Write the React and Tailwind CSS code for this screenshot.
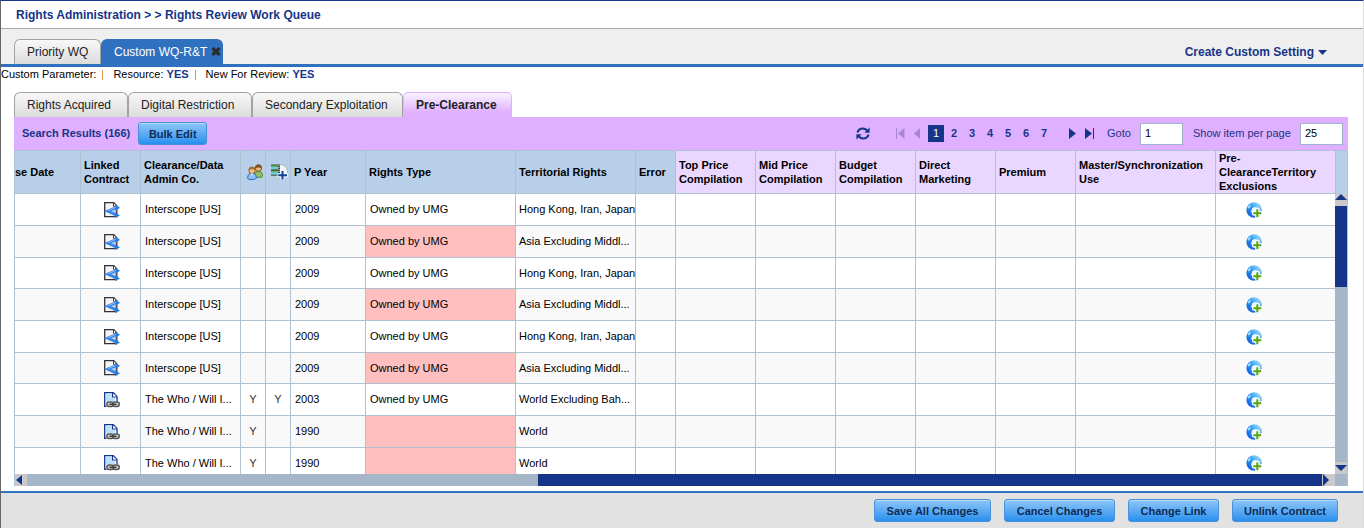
const columns = [
  { title: "se Date", width: "w-[66px]" },
  { title: "Linked Contract", width: "w-[60px]" },
  { title: "Clearance/Data Admin Co.", width: "w-[100px]" },
  { title: "Artist consent", width: "w-[25px]", icon: "people" },
  { title: "Sample", width: "w-[25px]", icon: "film" },
  { title: "P Year", width: "w-[75px]" },
  { title: "Rights Type", width: "w-[150px]" },
  { title: "Territorial Rights", width: "w-[120px]" },
  { title: "Error", width: "w-[40px]" },
  { title: "Top Price Compilation", width: "w-[80px]", lilac: true },
  { title: "Mid Price Compilation", width: "w-[80px]", lilac: true },
  { title: "Budget Compilation", width: "w-[80px]", lilac: true },
  { title: "Direct Marketing", width: "w-[80px]", lilac: true },
  { title: "Premium", width: "w-[80px]", lilac: true },
  { title: "Master/Synchronization Use", width: "", lilac: true },
  { title: "Pre-ClearanceTerritory Exclusions", width: "w-[119px]", lilac: true },
];

const japan = "Hong Kong, Iran, Japan";
const asia = "Asia Excluding Middl...";
const rows = [
  { co: "Interscope [US]", year: "2009", type: "Owned by UMG", terr: japan },
  { co: "Interscope [US]", year: "2009", type: "Owned by UMG", terr: asia, alert: true },
  { co: "Interscope [US]", year: "2009", type: "Owned by UMG", terr: japan },
  { co: "Interscope [US]", year: "2009", type: "Owned by UMG", terr: asia, alert: true },
  { co: "Interscope [US]", year: "2009", type: "Owned by UMG", terr: japan },
  { co: "Interscope [US]", year: "2009", type: "Owned by UMG", terr: asia, alert: true },
  { co: "The Who / Will I...", a: "Y", b: "Y", year: "2003", type: "Owned by UMG", terr: "World Excluding Bah...", linked: true },
  { co: "The Who / Will I...", a: "Y", year: "1990", type: "", terr: "World", alert: true, linked: true },
  { co: "The Who / Will I...", a: "Y", year: "1990", type: "", terr: "World", alert: true, linked: true },
];

function SplitIcon() {
  return (
    <svg width="16" height="16" viewBox="0 0 16 16" className="mx-auto block">
      <path d="M.7.7h9.1l3 3v11H.7z" fill="#f2f3f5" stroke="#333" strokeWidth="1.3" />
      <path d="M9.500 1v3.300h3.300" fill="#fff" stroke="#444" />
      <path d="M2.500 9 12 5.300V13z" fill="#a9cdf8" />
      <path d="M12.500 5.500 3.500 9l9 4.200" fill="none" stroke="#3a86e6" strokeWidth="2.600" />
      <path d="m11 2.500 5 3.300-4.500 2.900zM11 10.200l5 3.200-5 2.600z" fill="#2c78e2" />
      <path d="M4 8.600 12 5.300" stroke="#8fc1fa" strokeWidth=".9" />
    </svg>
  );
}

function LinkedDocIcon() {
  return (
    <svg width="16" height="16" viewBox="0 0 16 16" className="mx-auto block">
      <path d="M.7.7h8.600l3.700 3.700v9.900H.7z" fill="#fff" stroke="#163588" strokeWidth="1.300" />
      <path d="M2 2h5.500v4H11v4H2z" fill="#b9e0fa" />
      <path d="M8.500 1v4H13" fill="#fff" stroke="#163588" strokeWidth="1.200" />
      <path d="M2 9h14v6.500H2z" fill="#fff" fillOpacity=".7" />
      <rect x="2.900" y="10" width="6.400" height="4.600" rx="2" fill="#ccc" stroke="#555" strokeWidth="1.500" />
      <rect x="9" y="10" width="6.200" height="4.600" rx="2" fill="#ccc" stroke="#555" strokeWidth="1.500" />
      <path d="M5.500 12.300h7" stroke="#3f3f3f" strokeWidth="1.500" />
    </svg>
  );
}

function GlobeAddIcon() {
  return (
    <svg width="17" height="16" viewBox="0 0 17 16" className="block">
      <defs>
        <linearGradient id="globe" x1="0" y1="1" x2="1" y2="0">
          <stop offset="0" stopColor="#0a46d8" />
          <stop offset=".5" stopColor="#2d9bf3" />
          <stop offset="1" stopColor="#c6ecfd" />
        </linearGradient>
      </defs>
      <circle cx="8.200" cy="8" r="7.800" fill="url(#globe)" />
      <path d="M6.200 6.200 8.600 5l3 .6 2.400 1.600-2 5-3.600 1.800-2.200-2-1-2.600z" fill="#e9f8ff" />
      <path d="M1.600 5.200 3.800 2.600l1 1.600-2 2.600z" fill="#a8dffb" />
      <path d="M10.500 2.200 13.500 4l.6 2.200-2.800-1.400z" fill="#7fcdf8" />
      <path d="M9.300 6.300h4v3h3v4h-3V16h-4v-2.700h-3v-4h3z" fill="#fff" />
      <path d="M10.300 7.300h2v3h3v2h-3v3h-2v-3h-3v-2h3z" fill="#56a50f" />
    </svg>
  );
}

function PeopleIcon() {
  return (
    <svg width="16" height="16" viewBox="0 0 16 16" className="block shrink-0">
      <path d="M7.500 11.800c0-3 1.500-4.300 4-4.300s4 1.300 4 4c0 1.300-1 1.800-2.500 1.800H8z" fill="#93bd62" stroke="#4b8a24" />
      <circle cx="11.400" cy="4.200" r="3.200" fill="#e9b878" stroke="#77501f" />
      <path d="M7.900 4.400C8 1.500 10 .3 11.500.3s3.400 1 3.500 4.100c-2-1.300-4.900-1.300-7.100 0z" fill="#80551f" />
      <path d="M.7 13.800c0-3 1.500-4.600 4.300-4.600s4.300 1.600 4.300 4.300c0 1.300-1.300 2-3 2H3c-1.500 0-2.300-.6-2.300-1.700z" fill="#8dc0f5" stroke="#2267c4" />
      <circle cx="5" cy="6.500" r="3.100" fill="#f2c388" stroke="#8d5a1c" />
      <path d="M1.500 6.300C1.700 3.600 3.300 2.600 5 2.600s3.300 1 3.500 3.700C6.300 5 4 5 1.500 6.300z" fill="#a66c22" />
      <path d="M3.800 9.600 5 11.500l1.300-1.900z" fill="#fff" />
    </svg>
  );
}

function FilmAddIcon() {
  return (
    <svg width="17" height="16" viewBox="0 0 17 16" className="block shrink-0">
      <circle cx="9.500" cy="7.500" r="7" fill="#f4f6f8" stroke="#a9b1b8" />
      <path d="M0 .5h9v11.200H0z" fill="#404b4e" />
      <path d="M0 1.500h7v3.700H0zM0 6.700h7v3.800H0z" fill="#57bb4f" />
      <path d="M0 3h7v2.200H0zM0 8.200h7v2.300H0z" fill="#76c9e4" />
      <path d="M8 1v11" stroke="#fff" strokeWidth=".9" strokeDasharray="1 1" />
      <path d="M9.500 6h4v3.200H17v4h-3.500V16h-4v-2.800H6.500v-4h3z" fill="#e8f1fb" />
      <path d="M10.500 7h2v3.200H16v2h-3.500v3.300h-2v-3.300H7.300v-2h3.200z" fill="#0d4595" />
    </svg>
  );
}

function RefreshIcon() {
  return (
    <svg width="14" height="13" viewBox="0 0 14 13" className="block">
      <path d="M1.500 5.500C2.200 3 4.200 1.500 6.800 1.500c1.900 0 3.200.7 4.300 2M12.500 7.500c-.7 2.500-2.700 4-5.300 4-1.900 0-3.200-.7-4.300-2" fill="none" stroke="#163588" strokeWidth="2.200" />
      <path d="M13.600.5v5.200H8.400zM.4 12.500V7.300h5.200z" fill="#163588" />
    </svg>
  );
}

function BlueButton({ width, children }) {
  return (
    <button
      className={`${width} h-[23px] rounded-[3px] border border-[#4a90dc] bg-linear-to-b from-[#8cc6f7] to-[#2390ee] text-[11px] leading-[20px] font-bold whitespace-nowrap text-[#0d2b57] shadow-[inset_0_1px_0_#b4dafa]`}
    >
      {children}
    </button>
  );
}

const grayTab =
  "h-[25px] rounded-t-[6px] border border-b-0 border-[#a3a3a3] bg-linear-to-b from-[#f8f8f8] to-[#dcdcdc] pl-3 text-left text-[12px] whitespace-nowrap text-[#222]";

function Cell({ children, className = "" }) {
  return (
    <td className={`overflow-hidden border-r border-b border-[#b0c1d2] p-0 whitespace-nowrap last:border-r-0 ${className}`}>
      {children}
    </td>
  );
}

export default function App() {
  return (
    <div className="flex h-screen flex-col overflow-hidden border-t border-r border-l border-t-[#163588] border-r-[#dcdcdc] border-l-[#666] bg-white font-['Liberation_Sans',Arial,sans-serif] text-[11px] text-black">
      <header className="flex h-7 shrink-0 items-center border-b border-[#a9a9a9] pl-[15px] text-[12px] font-bold text-[#163588]">
        <h1>Rights Administration &gt; &gt; Rights Review Work Queue</h1>
      </header>

      <nav className="flex h-[38px] shrink-0 items-end justify-between border-b-3 border-[#3071bf] bg-[#efefef] pr-9 pl-[13px]">
        <div className="flex">
          <button className={`${grayTab} w-[87px]`}>Priority WQ</button>
          <div className="flex h-[25px] w-[122px] items-center rounded-t-[6px] bg-[#3071bf] pl-[13px] text-[12px] text-white">
            <button className="whitespace-nowrap">Custom WQ-R&amp;T</button>
            <button aria-label="Close tab" className="ml-1">
              <svg width="10" height="9" viewBox="0 0 10 9" className="block">
                <path d="m1.500 1 7 7m0-7-7 7" stroke="#2b2b2b" strokeWidth="3.200" />
              </svg>
            </button>
          </div>
        </div>
        <button className="flex h-6 items-center gap-1 text-[12px] font-bold text-[#163588]">
          Create Custom Setting
          <svg width="9" height="5" viewBox="0 0 9 5">
            <path d="M0 0h9L4.500 5z" fill="#163588" />
          </svg>
        </button>
      </nav>

      <div className="flex h-[15px] shrink-0 items-center">
        <span>Custom Parameter:</span>
        <span className="mr-[10px] ml-[6px] h-[10px] w-px bg-[#e0984a]" />
        <span>
          Resource: <b className="text-[#163588]">YES</b>
        </span>
        <span className="mr-[10px] ml-[6px] h-[10px] w-px bg-[#6aaeea]" />
        <span>
          New For Review: <b className="text-[#163588]">YES</b>
        </span>
      </div>

      <main className="flex min-h-0 flex-1 flex-col pt-[10px] pr-[15px] pb-[5px] pl-[13px]">
        <div className="flex shrink-0">
          <button className={`${grayTab} w-[114px]`}>Rights Acquired</button>
          <button className={`${grayTab} w-[124px]`}>Digital Restriction</button>
          <button className={`${grayTab} w-[151px]`}>Secondary Exploitation</button>
          <button className="h-[25px] w-[109px] rounded-t-[5px] border border-b-0 border-[#dfb0ff] bg-linear-to-b from-[#faf3ff] to-[#dfb0ff] to-80% pl-3 text-left text-[12px] font-bold text-[#222]">
            Pre-Clearance
          </button>
        </div>

        <div className="flex h-[33px] shrink-0 items-center justify-between bg-[#dfb0ff] pr-[5px] pl-2 text-[#163588]">
          <div className="flex items-center gap-2">
            <b>Search Results (166)</b>
            <BlueButton width="w-[69px]">Bulk Edit</BlueButton>
          </div>
          <div className="flex items-center">
            <button aria-label="Refresh" className="mr-[26px]">
              <RefreshIcon />
            </button>
            <button aria-label="First page" className="mr-[9px]">
              <svg width="9" height="11" viewBox="0 0 9 11" className="block">
                <path d="M0 0h1v11H0zM8.500 0v11L2 5.500z" fill="#a687d3" />
              </svg>
            </button>
            <button aria-label="Previous page" className="mr-2">
              <svg width="6" height="11" viewBox="0 0 6 11" className="block">
                <path d="M6 0v11L0 5.500z" fill="#a687d3" />
              </svg>
            </button>
            <button className="h-[17px] w-4 bg-[#163588] text-white">1</button>
            <div className="mr-4 ml-px flex font-bold">
              {[2, 3, 4, 5, 6, 7].map((n) => (
                <button key={n} className="w-[18px]">
                  {n}
                </button>
              ))}
            </div>
            <button aria-label="Next page" className="mr-[9px]">
              <svg width="7" height="11" viewBox="0 0 7 11" className="block">
                <path d="M0 0v11l7-5.500z" fill="#163588" />
              </svg>
            </button>
            <button aria-label="Last page" className="mr-[13px]">
              <svg width="9" height="11" viewBox="0 0 9 11" className="block">
                <path d="M0 0v11l7-5.500zM8 0h1v11H8z" fill="#163588" />
              </svg>
            </button>
            <label htmlFor="goto" className="w-[33px]">
              Goto
            </label>
            <input id="goto" defaultValue="1" className="mr-[10px] h-[22px] w-[43px] border border-[#a3b3cc] bg-white pb-[2px] pl-1 text-black" />
            <label htmlFor="per-page" className="w-[107px] whitespace-nowrap">
              Show item per page
            </label>
            <input id="per-page" defaultValue="25" className="h-[22px] w-[43px] border border-[#a3b3cc] bg-white pb-[2px] pl-1 text-black" />
          </div>
        </div>

        <div className="flex min-h-0 flex-1 border-t border-l border-[#b0c1d2]">
          <div className="flex min-w-0 flex-1 flex-col">
            <div className="min-h-0 flex-1 overflow-hidden">
              <table className="w-full table-fixed border-separate border-spacing-0">
                <thead>
                  <tr className="h-[43px]">
                    {columns.map((c, i) => (
                      <th
                        key={c.title}
                        className={`${c.width} ${c.lilac ? "bg-[#ead7ff]" : "bg-[#b8cfe9]"} ${i === 0 ? "pl-0" : "pl-[3px]"} h-[43px] border-r border-b border-[#b0c1d2] py-0 pr-0 text-left align-middle leading-[14px] font-bold last:border-r-0`}
                      >
                        {c.icon === "people" && (
                          <span className="flex justify-center" aria-label={c.title}>
                            <PeopleIcon />
                          </span>
                        )}
                        {c.icon === "film" && (
                          <span className="flex justify-center" aria-label={c.title}>
                            <FilmAddIcon />
                          </span>
                        )}
                        {!c.icon && c.title}
                      </th>
                    ))}
                  </tr>
                </thead>
                <tbody>
                  {rows.map((r, i) => (
                    <tr key={i} className={`${i % 3 === 2 ? "h-[31px]" : "h-8"} ${i % 2 ? "bg-[#f9f9f9]" : "bg-white"}`}>
                      <Cell />
                      <Cell className="pl-[2px]">{r.linked ? <LinkedDocIcon /> : <SplitIcon />}</Cell>
                      <Cell className="pl-1">{r.co}</Cell>
                      <Cell className="text-center text-[#333]">{r.a}</Cell>
                      <Cell className="text-center text-[#333]">{r.b}</Cell>
                      <Cell className="pl-1">{r.year}</Cell>
                      <Cell className={r.alert ? "bg-[#ffbfbf] pl-1" : "pl-1"}>{r.type}</Cell>
                      <Cell className="pl-[3px]">{r.terr}</Cell>
                      <Cell />
                      <Cell />
                      <Cell />
                      <Cell />
                      <Cell />
                      <Cell />
                      <Cell />
                      <Cell className="pl-[30px]">
                        <button aria-label="Add territory exclusion" className="block">
                          <GlobeAddIcon />
                        </button>
                      </Cell>
                    </tr>
                  ))}
                </tbody>
              </table>
            </div>
            <div className="flex h-3 shrink-0 bg-[#a4b6c8]">
              <button aria-label="Scroll left" className="flex w-3 items-center bg-[#c9c9c9] pl-px">
                <svg width="6" height="10" viewBox="0 0 6 10">
                  <path d="M6 0v10L0 5z" fill="#163588" />
                </svg>
              </button>
              <div className="flex-[511]" />
              <div className="flex-[784] bg-[#163588]" />
              <button aria-label="Scroll right" className="flex w-[13px] items-center bg-[#c9c9c9] pl-px">
                <svg width="6" height="12" viewBox="0 0 6 12">
                  <path d="M0 0v12l6-6z" fill="#163588" />
                </svg>
              </button>
            </div>
          </div>
          <div className="flex w-[13px] shrink-0 flex-col border-r border-[#b0c1d2] bg-[#a4b6c8]">
            <div className="h-[43px] shrink-0 border-l border-[#b0c1d2] bg-[#b8cfe9]" />
            <button aria-label="Scroll up" className="flex h-3 shrink-0 justify-center bg-[#c9c9c9]">
              <svg width="12" height="6" viewBox="0 0 12 6">
                <path d="M0 6h12L6 0z" fill="#163588" />
              </svg>
            </button>
            <div className="flex-[81] bg-[#163588]" />
            <div className="flex-[175]" />
            <button aria-label="Scroll down" className="flex h-3 shrink-0 items-center justify-center bg-[#c9c9c9]">
              <svg width="12" height="6" viewBox="0 0 12 6">
                <path d="M0 0h12L6 6z" fill="#163588" />
              </svg>
            </button>
            <div className="h-3 shrink-0" />
          </div>
        </div>
      </main>

      <footer className="flex h-[37px] shrink-0 items-center justify-end gap-[13px] border-t-2 border-[#3071bf] bg-[#e2e2e2] pr-[25px]">
        <BlueButton width="w-[117px]">Save All Changes</BlueButton>
        <BlueButton width="w-[111px]">Cancel Changes</BlueButton>
        <BlueButton width="w-[91px]">Change Link</BlueButton>
        <BlueButton width="w-[106px]">Unlink Contract</BlueButton>
      </footer>
    </div>
  );
}
